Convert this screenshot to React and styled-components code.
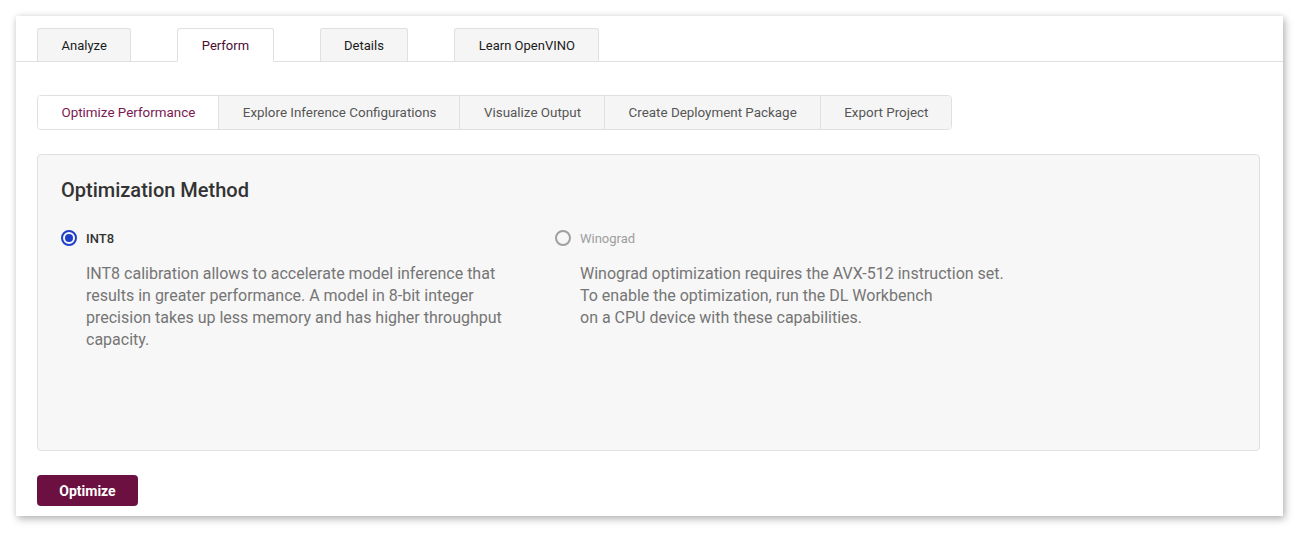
import styled, { createGlobalStyle } from 'styled-components';

const Global = createGlobalStyle`
  html, body {
    margin: 0;
    background: #fff;
  }
  body {
    padding: 16px;
    font-family: Roboto, "Liberation Sans", sans-serif;
    color: #333;
  }
`;

const topTabs = ['Analyze', 'Perform', 'Details', 'Learn OpenVINO'];
const subTabs = [
  'Optimize Performance',
  'Explore Inference Configurations',
  'Visualize Output',
  'Create Deployment Package',
  'Export Project',
];

const App = () => {
  return (
    <>
      <Global />
      <Card>
        <TabBar>
          {topTabs.map((t) => (
            <Tab key={t} $active={t === 'Perform'}>
              {t}
            </Tab>
          ))}
        </TabBar>
        <Content>
          <SubTabs>
            {subTabs.map((t, i) => (
              <SubTab key={t} $active={i === 0}>
                {t}
              </SubTab>
            ))}
          </SubTabs>
          <Panel>
            <Title>Optimization Method</Title>
            <Options>
              <Option>
                <RadioRow>
                  <Radio $checked />
                  <RadioLabel>INT8</RadioLabel>
                </RadioRow>
                <Description>
                  INT8 calibration allows to accelerate model inference that
                  results in greater performance. A model in 8-bit integer
                  precision takes up less memory and has higher throughput
                  capacity.
                </Description>
              </Option>
              <Option>
                <RadioRow>
                  <Radio $disabled />
                  <RadioLabel $disabled>Winograd</RadioLabel>
                </RadioRow>
                <Description>
                  Winograd optimization requires the AVX-512 instruction set.
                  <br />
                  To enable the optimization, run the DL Workbench
                  <br />
                  on a CPU device with these capabilities.
                </Description>
              </Option>
            </Options>
          </Panel>
          <div>
            <Button>Optimize</Button>
          </div>
        </Content>
      </Card>
    </>
  );
};

const Card = styled.div`
  width: 1267px;
  height: 500px;
  box-sizing: border-box;
  background: #fff;
  box-shadow: 2px 3px 8px rgba(0, 0, 0, 0.28), 0 0 6px rgba(0, 0, 0, 0.08);
  padding-top: 12px;
`;

const TabBar = styled.div`
  display: flex;
  gap: 46px;
  padding-left: 21px;
  border-bottom: 1px solid #e0e0e0;
  height: 33px;
`;

const Tab = styled.div`
  display: flex;
  align-items: center;
  justify-content: center;
  padding: 0 23.5px;
  box-sizing: border-box;
  font-size: 13px;
  color: ${(p) => (p.$active ? '#4a0d33' : '#1a1a1a')};
  background: ${(p) => (p.$active ? '#fff' : '#f5f5f5')};
  border: 1px solid #e0e0e0;
  border-bottom: ${(p) => (p.$active ? '1px solid #fff' : 'none')};
  border-radius: 3px 3px 0 0;
  height: ${(p) => (p.$active ? '34px' : '33px')};
`;

const Content = styled.div`
  display: flex;
  flex-direction: column;
  gap: 24px;
  padding: 33px 23px 0 21px;
`;

const SubTabs = styled.div`
  display: flex;
  align-self: flex-start;
  border: 1px solid #e0e0e0;
  border-radius: 4px;
  overflow: hidden;
  height: 35px;
  box-sizing: border-box;
`;

const SubTab = styled.div`
  display: flex;
  align-items: center;
  padding: 0 23px 0 23.5px;
  font-size: 13.4px;
  color: ${(p) => (p.$active ? '#7a1850' : '#555')};
  background: ${(p) => (p.$active ? '#fff' : '#f5f5f5')};
  & + & {
    border-left: 1px solid #e0e0e0;
  }
`;

const Panel = styled.div`
  height: 297px;
  box-sizing: border-box;
  background: #f7f7f7;
  border: 1px solid #e0e0e0;
  border-radius: 4px;
  padding: 22px 23px;
`;

const Title = styled.h2`
  margin: 0;
  font-size: 20px;
  font-weight: 500;
  line-height: 26px;
  color: #333;
`;

const Options = styled.div`
  display: grid;
  grid-template-columns: 494px 1fr;
  margin-top: 25px;
`;

const Option = styled.div`
  display: flex;
  flex-direction: column;
`;

const RadioRow = styled.div`
  display: flex;
  align-items: center;
  gap: 9px;
  height: 20px;
`;

const Radio = styled.span`
  width: 16px;
  height: 16px;
  box-sizing: border-box;
  border-radius: 50%;
  border: 2px solid ${(p) => (p.$checked ? '#1f3fc9' : '#a0a0a0')};
  display: flex;
  align-items: center;
  justify-content: center;
  &::after {
    content: '';
    display: ${(p) => (p.$checked ? 'block' : 'none')};
    width: 8px;
    height: 8px;
    border-radius: 50%;
    background: #1f3fc9;
  }
`;

const RadioLabel = styled.span`
  font-size: 13px;
  font-weight: ${(p) => (p.$disabled ? 400 : 500)};
  color: ${(p) => (p.$disabled ? '#9e9e9e' : '#333')};
`;

const Description = styled.p`
  margin: 15px 0 0 25px;
  max-width: 430px;
  font-size: 16px;
  line-height: 22px;
  color: #757575;
`;

const Button = styled.button`
  width: 101px;
  height: 31px;
  border: none;
  border-radius: 4px;
  background: #6b1040;
  color: #fff;
  font-family: Roboto, "Liberation Sans", sans-serif;
  font-size: 14px;
  font-weight: 700;
  cursor: pointer;
`;

export default App;
